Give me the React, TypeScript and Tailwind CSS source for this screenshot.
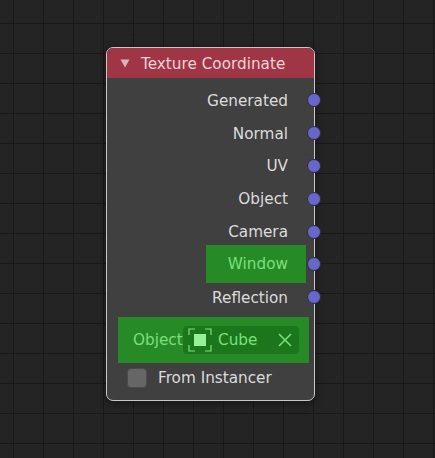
const outputs = ['Generated', 'Normal', 'UV', 'Object', 'Camera', 'Window', 'Reflection']

function Socket() {
  return <span className="absolute right-[-7px] top-1/2 -mt-[7px] w-[14px] h-[14px] rounded-full bg-[#6666cc] border-[1px] border-[#2e2e38]" />
}

export default function App() {
  return (
    <div
      className="w-[435px] h-[458px] pt-[47px] pl-[106px] overflow-hidden bg-[#242424] bg-[linear-gradient(to_right,#181818_1px,transparent_1px),linear-gradient(to_bottom,#181818_1px,transparent_1px)] bg-[size:30px_30px] bg-[position:13px_23px] text-[15.25px] leading-[20px] text-[#dcdcdc]"
      style={{ fontFamily: '"DejaVu Sans", sans-serif' }}
    >
      <div className="w-[209px] h-[354px] flex flex-col rounded-[7px] border border-[#c8c8c8] bg-[#424242]/95 shadow-[0_2px_8px_rgba(0,0,0,0.45)]">
        <div className="h-[30px] flex items-center gap-[11px] pl-[13px] rounded-t-[6px] bg-[#a03545] text-[#e8d4d7]">
          <svg width="10" height="9" viewBox="0 0 10 9" className="shrink-0">
            <path d="M0.5 0.5H9.5L5 8.5Z" fill="#d8b4b9" />
          </svg>
          <span className="pt-[1px]">Texture Coordinate</span>
        </div>

        <div className="flex flex-col pt-[6px]">
          {outputs.map(name => (
            <div key={name} className="relative h-[32.8px] flex items-center justify-end">
              {name === 'Window' ? (
                <span className="w-[100px] h-[38px] -my-[3px] mr-[8px] pr-[18px] flex items-center justify-end bg-[#268a26] text-[#7ce07c]">
                  {name}
                </span>
              ) : (
                <span className="pr-[26px] pt-[1px]">{name}</span>
              )}
              <Socket />
            </div>
          ))}
        </div>

        <div className="mt-[3px] mx-[11px] w-[191px] h-[46px] flex items-center bg-[#268a26] text-[#7ce07c]">
          <span className="pl-[15px] pt-[1px] w-[65px] shrink-0">Object</span>
          <div className="w-[116px] h-[28px] flex items-center rounded-[4px] bg-[#1c771c]">
            <svg width="24" height="24" viewBox="0 0 24 24" className="ml-[5px] shrink-0">
              <path d="M1 7V1H7M17 1H23V7M23 17V23H17M7 23H1V17" fill="none" stroke="#7ce07c" strokeWidth="1.2" />
              <rect x="6" y="6" width="12" height="12" fill="#96f296" />
            </svg>
            <span className="ml-[6px] pt-[1px]">Cube</span>
            <svg width="14" height="14" viewBox="0 0 14 14" className="ml-auto mr-[7px] shrink-0">
              <path d="M1 1L13 13M13 1L1 13" fill="none" stroke="#7ce07c" strokeWidth="1.5" />
            </svg>
          </div>
        </div>

        <div className="mt-[5px] pl-[20px] flex items-center gap-[11px]">
          <span className="w-[20px] h-[20px] rounded-[4px] bg-[#666666] border border-[#4a4a4a]" />
          <span>From Instancer</span>
        </div>
      </div>
    </div>
  )
}
